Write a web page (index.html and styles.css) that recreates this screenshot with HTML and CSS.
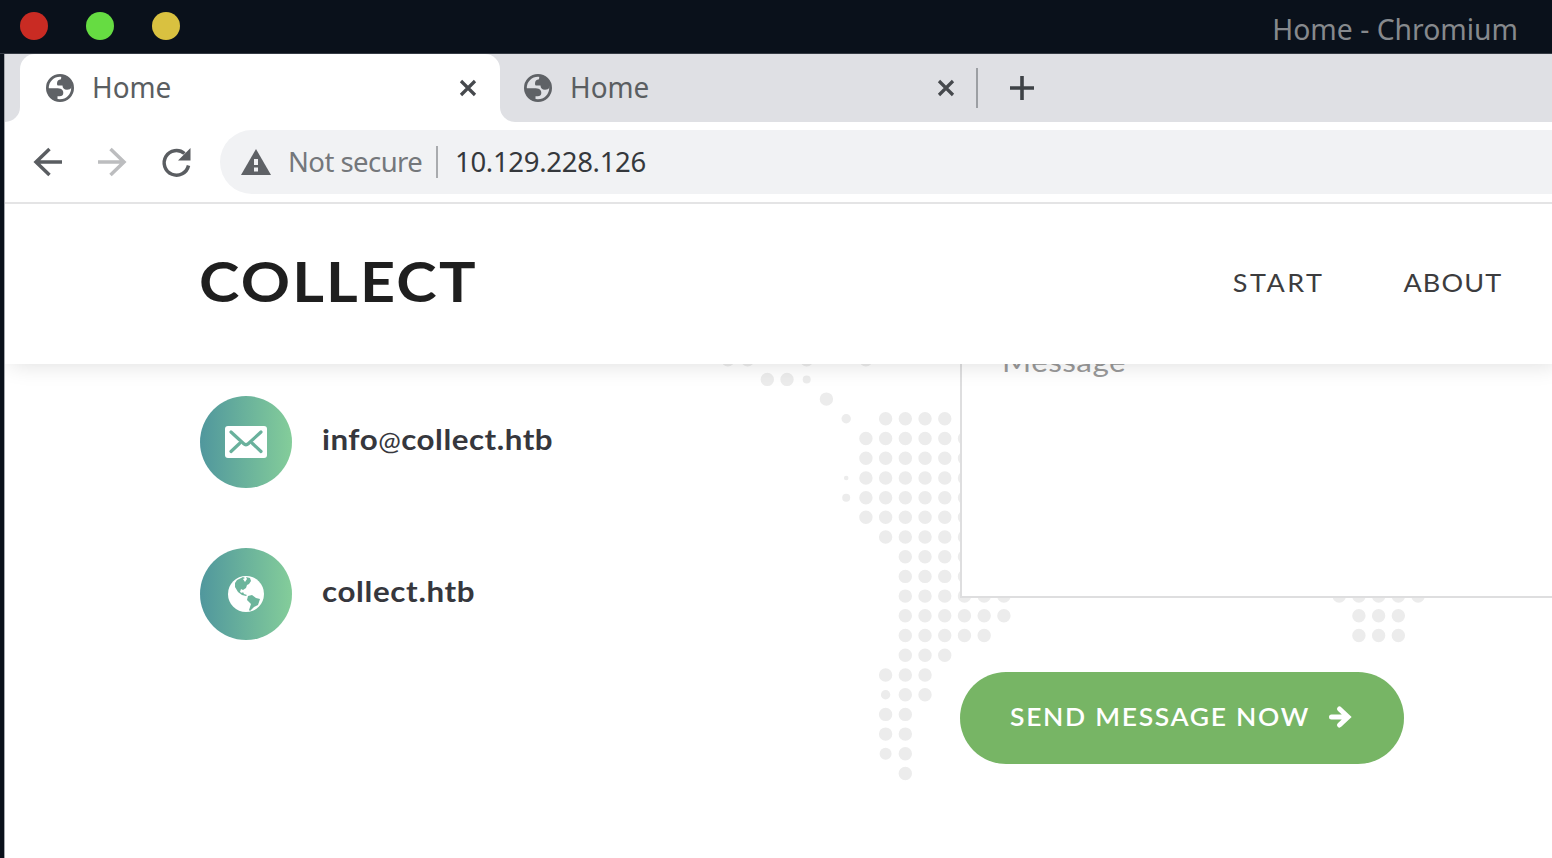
FILE: index.html
```html
<!DOCTYPE html>
<html lang="en">
<head>
<meta charset="utf-8">
<title>Home</title>
<link rel="stylesheet" href="styles.css">
</head>
<body>
<svg class="defs" aria-hidden="true">
  <symbol id="globe" viewBox="0 0 28 28"><circle cx="14" cy="14" r="12.600" fill="none" stroke="#5f6266" stroke-width="2.800"/><path d="M1 14.300h9c5 0 7.300 1.200 7.300 4.700 0 2.300-1.600 3.300-3.600 3.300h-2.200v4.700Q3 26 1 14.300zM16 1.500q-1 1.200-1 3.800-4 .3-4 4.200 0 1.800.8 2h4.700c0 2.700 1.500 4.200 4.500 4.200 2.300 0 3.500-.7 4.500-2.200Q26 4 16 1.500z"/></symbol>
  <symbol id="close" viewBox="0 0 18 18"><path d="M2 2l14 14M16 2L2 16"/></symbol>
</svg>
<div class="window">
  <header class="titlebar">
    <div class="lights"><i class="red"></i><i class="green"></i><i class="yellow"></i></div>
    <span class="title">Home - Chromium</span>
  </header>
  <div class="browser">
    <div class="tabs">
      <div class="tab active"><svg class="fav"><use href="#globe"/></svg><span>Home</span><svg class="close"><use href="#close"/></svg></div>
      <div class="strip">
        <div class="tab inactive"><svg class="fav"><use href="#globe"/></svg><span>Home</span><svg class="close"><use href="#close"/></svg></div>
        <i class="tab-divider"></i>
        <svg class="plus" viewBox="0 0 24 24"><path d="M12 0v24M0 12h24"/></svg>
      </div>
    </div>
    <div class="toolbar">
      <svg class="nav" viewBox="0 0 28 28"><path d="M28 14H2M15.500 1L2 14l13.500 13"/></svg>
      <svg class="nav disabled" viewBox="0 0 28 28"><path d="M0 14h26M12.500 1L26 14 12.500 27"/></svg>
      <svg class="nav reload" viewBox="0 0 28 28"><path d="M26.500 17.500A12.300 12.300 0 1 1 22.500 5.500"/><path class="solid" d="M28.500 0v12.500H16z"/></svg>
      <div class="address">
        <svg class="warn" viewBox="0 0 30 26"><path d="M15 0l15 26H0z"/><path class="cut" d="M13 10h4v6h-4zM13 18.500h4v4h-4z"/></svg>
        <span class="insecure">Not secure</span><i class="sep"></i><span class="url">10.129.228.126</span>
      </div>
    </div>
    <main class="site">
      <div class="site-header">
        <span class="logo">COLLECT</span>
        <nav class="menu"><span class="start">START</span><span class="about">ABOUT</span></nav>
      </div>
      <section class="contact">
        <svg class="map" viewBox="5 364 1547 494">
          <path class="dots" d="M727.900 359.700h20M806.700 359.700h.1M865.900 359.700h.1M767.300 379.400h20M826.400 399.100h.1M885.600 418.800h60M865.900 438.500h99M865.900 458.200h99M865.900 478h99M865.900 497.700h99M865.900 517.300h99M885.600 537h79M905.300 556.700h60M905.300 576.400h60M905.300 596.100h99M905.300 615.800h99M905.300 635.500h79M905.300 655.200h40M885.600 675h40M905.300 694.700h20M885.600 714.400h20M885.600 734.100h20M905.300 753.800h.1M905.300 773.500h.1M1339.200 596.100h79M1358.900 615.800h40M1358.900 635.500h40"/>
          <g class="small"><circle cx="806.700" cy="379.400" r="4"/><circle cx="846.200" cy="418.800" r="4.700"/><circle cx="846.200" cy="478" r="2.300"/><circle cx="846.200" cy="497.700" r="4"/><circle cx="885.600" cy="694.700" r="4.700"/><circle cx="885.600" cy="753.800" r="6"/></g>
        </svg>
        <div class="details">
          <div class="row"><span class="badge"><svg class="mail" viewBox="0 0 42 32"><rect width="42" height="32" rx="3"/><path d="M6 6l12.500 11.500q2.500 2.500 5 0L36 6M6 25.500l8.500-8M36 25.500l-8.500-8"/></svg></span><span class="label email">info<small>@</small>collect.htb</span></div>
          <div class="row"><span class="badge"><svg class="earth" viewBox="0 0 36 36"><circle cx="18" cy="18" r="18"/><path d="M9 4l6-3 2 1-2 1 2 3 2-3-1-2 4 1 1 3-2 3-2 1-1 3-3 2-2-1-1 3 2 1 1-1 1 2 3 1-1 1-4-1-4-3-3-5V7zM20 20l4-1 4 3 4 1-2 6-4 2-4 4-1-1 2-6-4-4z"/></svg></span><span class="label domain">collect.htb</span></div>
        </div>
        <form class="form">
          <div class="message"><span>Message</span></div>
          <div class="send"><span>SEND MESSAGE NOW</span><svg viewBox="0 0 23 22"><path d="M2.500 11h16M10.500 3l8.500 8-8.500 8"/></svg></div>
        </form>
      </section>
    </main>
  </div>
</div>
</body>
</html>
```
FILE: styles.css
```css
* { box-sizing: border-box; }
body { margin: 0; overflow: hidden; background: #0a111b; font-family: "Noto Sans", sans-serif; }
i { display: block; }
svg { display: block; flex: none; }
span { white-space: nowrap; }
.defs { position: absolute; width: 0; height: 0; }
.window { width: 1552px; height: 858px; display: flex; flex-direction: column; }
.titlebar { height: 54px; flex: none; display: flex; justify-content: space-between; padding: 0 34px 0 20px; border-bottom: 1px solid #353b44; }
.lights { display: flex; gap: 38px; padding-top: 12px; }
.lights i { width: 28px; height: 28px; border-radius: 50%; }
.red { background: #c92b23; }
.green { background: #66dc42; }
.yellow { background: #d9c140; }
.title { font-size: 29.500px; line-height: 38px; padding-top: 10px; color: #86898d; transform: scaleX(.96); transform-origin: right; }
.browser { flex: 1; min-height: 0; margin-left: 4px; background: #fff; display: flex; flex-direction: column; border-left: 1px solid #a5a8ad; }
.tabs { height: 68px; flex: none; display: flex; background: #fff; }
.tabs::before { content: ""; width: 15px; background: #dfe0e4; border-radius: 0 0 15px 0; }
.strip { flex: 1; display: flex; background: #dfe0e4; border-radius: 0 0 0 15px; }
.tab { display: flex; align-items: center; height: 68px; font-size: 29.500px; line-height: 36px; color: #5a5e61; }
.tab span { margin: 0 auto 3px 18px; transform: scaleX(.945); transform-origin: left; }
.active { width: 480px; padding: 0 23px 0 26px; background: linear-gradient(#dfe0e4, #dfe0e4) top / 100% 18px no-repeat; position: relative; isolation: isolate; }
.active::before { content: ""; position: absolute; inset: 0; background: #fff; border-radius: 15px 15px 0 0; z-index: -1; }
.inactive { width: 476px; padding: 0 21px 0 24px; }
.fav { width: 28px; height: 28px; fill: #5f6266; }
.close { width: 18px; height: 18px; fill: none; stroke: #46494d; stroke-width: 3.200px; }
.tab-divider { width: 2px; height: 40px; margin-top: 14px; background: #9c9fa3; }
.plus { width: 24px; height: 24px; margin: 22px 0 0 32px; fill: none; stroke: #3e4246; stroke-width: 3.600px; }
.toolbar { height: 82px; flex: none; display: flex; align-items: center; padding-left: 29px; border-bottom: 2px solid #e4e4e5; }
.nav { width: 28px; height: 28px; margin-right: 36px; fill: none; stroke: #5a5d61; stroke-width: 3.500px; overflow: visible; }
.nav.disabled { stroke: #bcbdbf; }
.nav.reload { margin-right: 30px; }
.nav .solid { fill: #5a5d61; stroke: none; }
.address { flex: 1; height: 64px; display: flex; align-items: center; padding-left: 21px; background: #f1f2f4; border-radius: 32px 0 0 32px; }
.warn { width: 30px; height: 26px; fill: #5f6266; }
.cut { fill: #f1f2f4; }
.insecure { margin-left: 17px; width: 133px; font-size: 27.500px; letter-spacing: -.55px; color: #74777b; padding-bottom: 1px; }
.sep { width: 2px; height: 32px; margin: 0 17px 0 15px; background: #a9abae; }
.url { font-size: 27.500px; letter-spacing: -.3px; color: #35383c; padding-bottom: 1px; }
.site { flex: 1; min-height: 0; display: flex; flex-direction: column; font-family: Lato, sans-serif; }
.site-header { height: 160px; flex: none; display: flex; align-items: center; justify-content: space-between; padding: 0 50px 4px 194px; background: #fff; box-shadow: 5px 0 22px rgba(0,0,0,.14); position: relative; z-index: 2; clip-path: inset(0 0 -30px 0); }
.logo { font-size: 55.500px; font-weight: 700; letter-spacing: 2px; color: #1f1f1f; padding-bottom: 3px; transform: scaleX(1.1); transform-origin: left; }
.menu { display: flex; gap: 81px; font-size: 25.500px; color: #3c3c3e; }
.menu span { transform: scaleX(1.06); transform-origin: right; }
.start { letter-spacing: 2.300px; margin-right: 3px; }
.about { letter-spacing: 1.050px; }
.contact { flex: 1; min-height: 0; position: relative; display: flex; padding-left: 195px; }
.map { position: absolute; inset: 0; width: 1547px; height: 494px; }
.dots { fill: none; stroke: #ececec; stroke-width: 13.400px; stroke-linecap: round; stroke-dasharray: 0 19.720px; }
.small { fill: #ececec; }
.details { width: 760px; flex: none; padding-top: 32px; display: flex; flex-direction: column; gap: 60px; }
.row { display: flex; align-items: center; gap: 30px; font-size: 29px; font-weight: 700; color: #36373d; }
.label { padding-bottom: 8px; transform: scaleX(1.08); transform-origin: left; }
.email { letter-spacing: .48px; }
.email small { font-size: .86em; font-weight: 400; }
.domain { letter-spacing: .6px; }
.badge { width: 92px; height: 92px; border-radius: 50%; display: grid; place-items: center; background: linear-gradient(90deg, #50979d, #84cd9a); }
.mail { width: 42px; height: 32px; fill: #fff; }
.mail path { fill: none; stroke: #69b19c; stroke-width: 3.200px; stroke-linecap: round; }
.earth { width: 36px; height: 36px; fill: #fff; }
.earth path { fill: #6cb59c; }
.form { position: relative; flex: 1; }
.message { height: 264px; margin-top: -30px; padding: 8px 40px; background: #fff; border: 2px solid #dededf; border-right: 0; font-size: 29px; line-height: 34px; color: #999; }
.message span { display: inline-block; letter-spacing: .4px; transform: scaleX(1.085); transform-origin: left; }
.send { width: 444px; height: 92px; margin-top: 74px; padding: 0 52px 2px 50px; border-radius: 46px; display: flex; align-items: center; justify-content: space-between; background: #77b565; color: #fff; font-size: 25.500px; font-weight: 600; letter-spacing: 1.650px; }
.send span { padding-bottom: 2px; transform: scaleX(1.037); transform-origin: left; }
.send svg { width: 23px; height: 22px; fill: none; stroke: #fff; stroke-width: 5px; stroke-linecap: round; overflow: visible; }
```
